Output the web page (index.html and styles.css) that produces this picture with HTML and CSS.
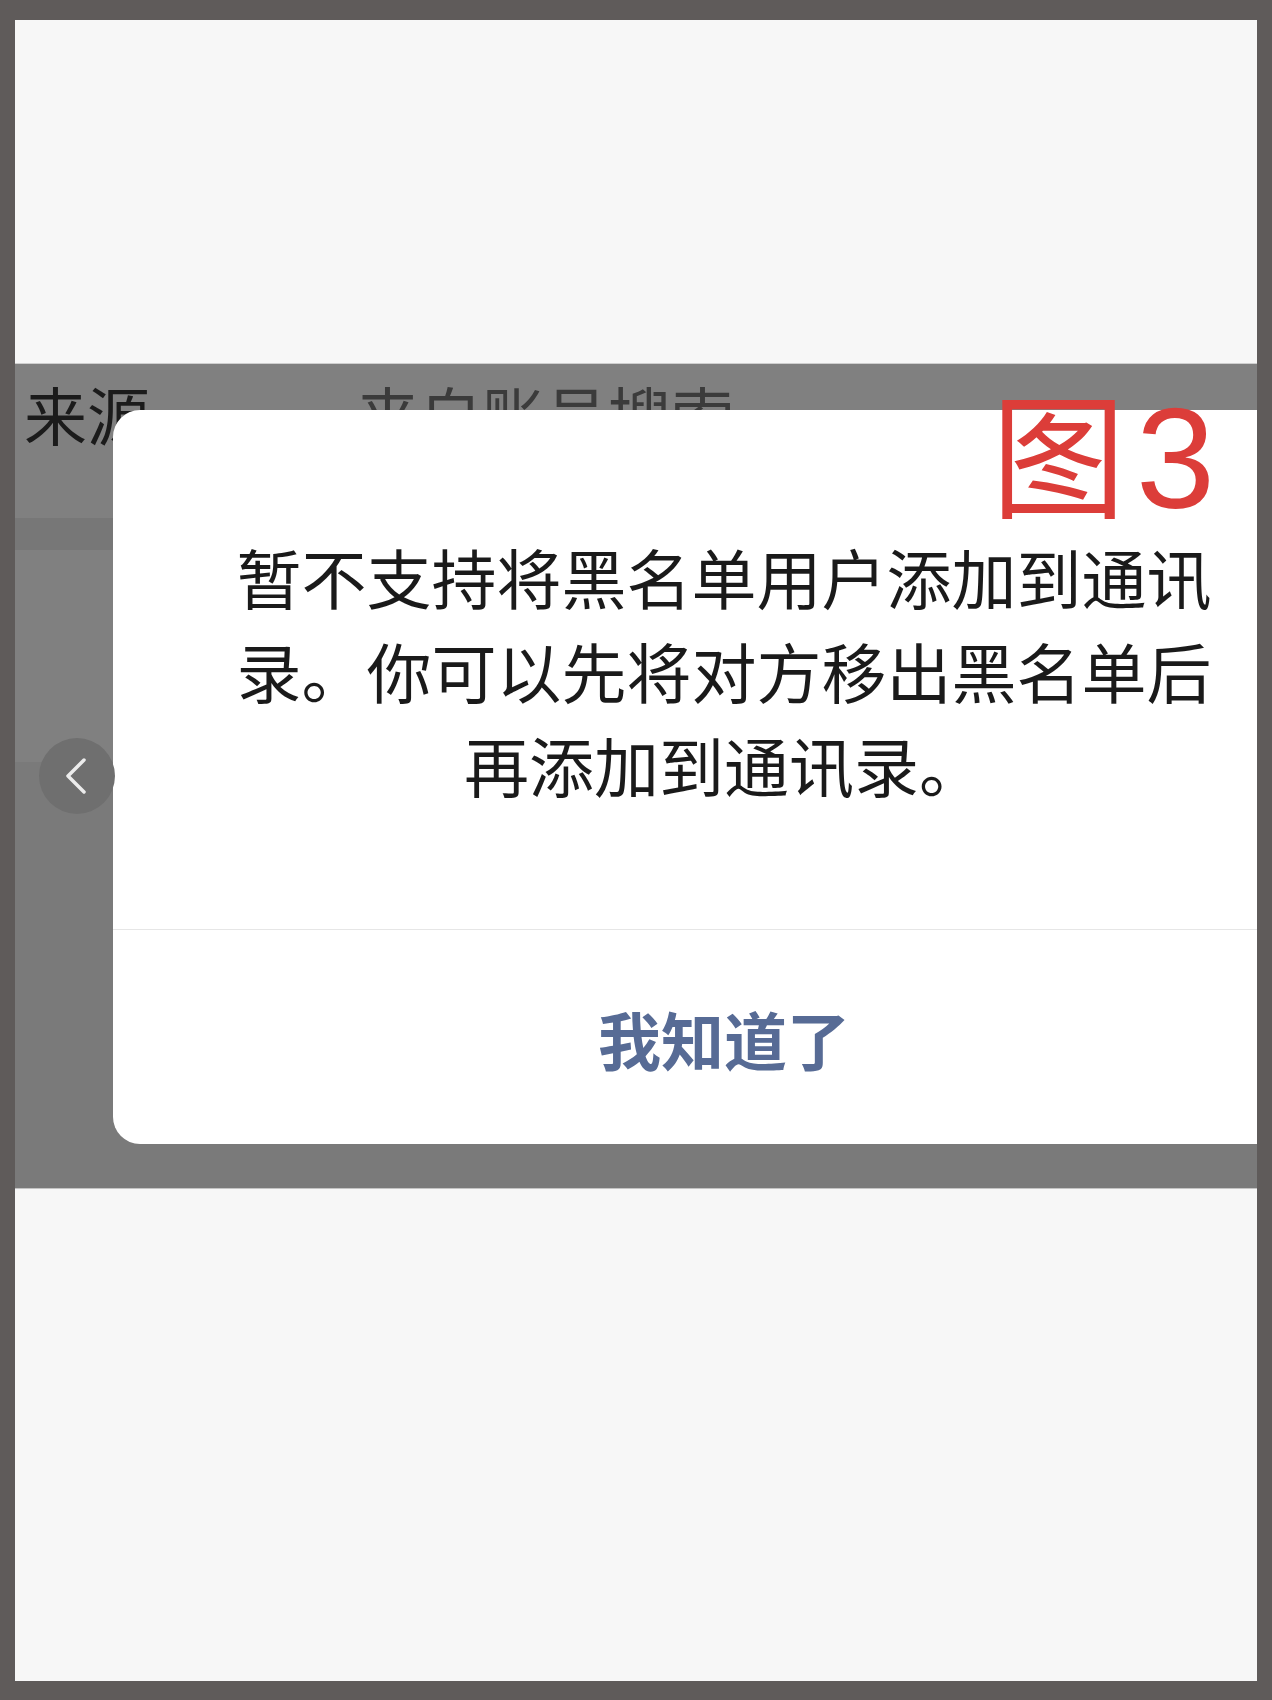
FILE: index.html
```html
<!DOCTYPE html>
<html lang="zh-CN">
<head>
<meta charset="utf-8">
<title>图3</title>
<link rel="stylesheet" href="styles.css">
</head>
<body>
<div class="frame">
  <div class="screen">
    <div class="top-area"></div>
    <div class="mask">
      <div class="row row-source">
        <span class="label">来源</span>
        <span class="value">来自账号搜索</span>
      </div>
      <div class="band"></div>
      <div class="row row-blank"></div>
      <div class="rest"></div>
    </div>
    <div class="bottom-area"></div>

    <div class="back">
      <svg width="76" height="76" viewBox="0 0 76 76">
        <circle cx="38" cy="38" r="38" fill="#6f6f6f"/>
        <path d="M45 22 L29 38 L45 54" fill="none" stroke="#ececec" stroke-width="3.5" stroke-linecap="round" stroke-linejoin="round"/>
      </svg>
    </div>

    <div class="dialog">
      <div class="msg">暂不支持将黑名单用户添加到通讯录。你可以先将对方移出黑名单后再添加到通讯录。</div>
      <div class="btn">我知道了</div>
    </div>

    <div class="tag"><span class="tag-cn">图</span><span class="tag-num">3</span></div>
  </div>
</div>
</body>
</html>
```

FILE: styles.css
```css
html, body {
  margin: 0;
  padding: 0;
}
body {
  background: #5f5b5a;
  font-family: "Noto Sans CJK SC", "Noto Sans", sans-serif;
}
.frame {
  box-sizing: border-box;
  width: 1272px;
  height: 1700px;
  padding: 20px 15px 19px 15px;
}
.screen {
  position: relative;
  overflow: hidden;
  height: 1661px;
  display: flex;
  flex-direction: column;
  background: #f7f7f7;
}
.top-area {
  flex: 0 0 343px;
  background: #f7f7f7;
}
.mask {
  flex: 0 0 825px;
  display: flex;
  flex-direction: column;
  border-top: 1px solid #cfcfcf;
  box-sizing: border-box;
}
.row-source {
  flex: 0 0 154px;
  background: #808080;
  display: flex;
  align-items: flex-start;
  padding-top: 17px;
  box-sizing: border-box;
  font-size: 63px;
  line-height: 1;
}
.label {
  margin-left: 9px;
  color: #1b1b1b;
}
.value {
  margin-left: 206px;
  color: #3b3b3b;
}
.band {
  flex: 0 0 32px;
  background: #777777;
}
.row-blank {
  flex: 0 0 212px;
  background: #808080;
}
.rest {
  flex: 1;
  background: #7a7a7a;
}
.bottom-area {
  flex: 1;
  background: #f7f7f7;
  border-top: 1px solid #c4c4c4;
}
.back {
  position: absolute;
  left: 24px;
  top: 718px;
  width: 76px;
  height: 76px;
  z-index: 3;
}
.back svg {
  display: block;
}
.dialog {
  position: absolute;
  left: 98px;
  top: 390px;
  width: 1222px;
  height: 734px;
  background: #ffffff;
  border-radius: 27px;
  display: flex;
  flex-direction: column;
  z-index: 2;
}
.msg {
  flex: 0 0 520px;
  box-sizing: border-box;
  display: flex;
  align-items: center;
  justify-content: center;
  padding: 0 116px;
  text-align: center;
  font-size: 65px;
  line-height: 94px;
  color: #1a1a1a;
  border-bottom: 1px solid #e6e6e6;
}
.btn {
  flex: 1;
  display: flex;
  align-items: center;
  justify-content: center;
  font-size: 63px;
  font-weight: 700;
  color: #576b95;
}
.tag {
  position: absolute;
  left: 976px;
  top: 362px;
  z-index: 4;
  display: flex;
  align-items: baseline;
  color: #dc3d39;
  line-height: 1;
}
.tag-cn {
  font-family: "Noto Sans CJK SC", sans-serif;
  font-size: 135px;
}
.tag-num {
  font-family: "Liberation Sans", Arial, sans-serif;
  font-size: 142px;
  margin-left: 10px;
}
```
